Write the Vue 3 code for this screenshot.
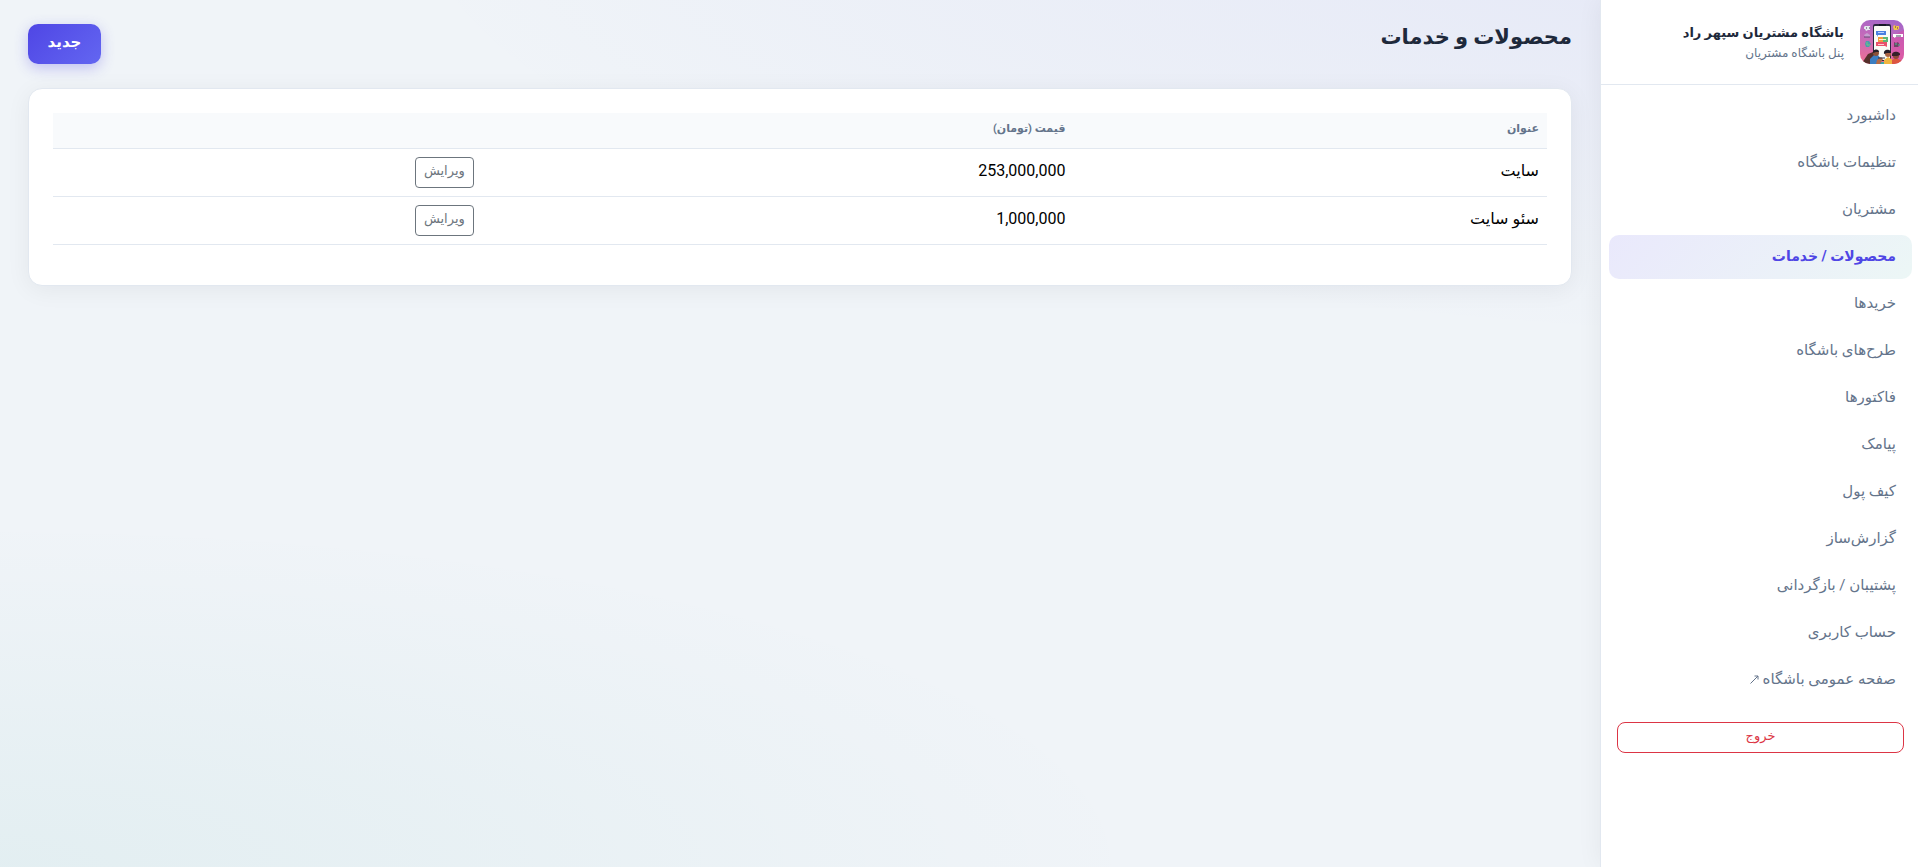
<script setup>
const nav = [
  { label: 'داشبورد' },
  { label: 'تنظیمات باشگاه' },
  { label: 'مشتریان' },
  { label: 'محصولات / خدمات', active: true },
  { label: 'خریدها' },
  { label: 'طرح‌های باشگاه' },
  { label: 'فاکتورها' },
  { label: 'پیامک' },
  { label: 'کیف پول' },
  { label: 'گزارش‌ساز' },
  { label: 'پشتیبان / بازگردانی' },
  { label: 'حساب کاربری' },
  { label: 'صفحه عمومی باشگاه', external: true },
]
const products = [
  { title: 'سایت', price: '253,000,000' },
  { title: 'سئو سایت', price: '1,000,000' },
]
</script>

<template>
  <div class="app" dir="rtl" lang="fa">
    <aside class="sidebar">
      <header class="brand">
        <svg class="logo" viewBox="0 0 44 44" aria-hidden="true">
          <defs>
            <linearGradient id="logo-bg" x1="0.6" y1="0" x2="0.4" y2="1">
              <stop offset="0" stop-color="#a566c8" />
              <stop offset="0.5" stop-color="#c96bb8" />
              <stop offset="1" stop-color="#ec6f96" />
            </linearGradient>
          </defs>
          <rect width="44" height="44" fill="url(#logo-bg)" />
          <path d="M32 16 44 10V44H32z" fill="#d94aa4" opacity="0.5" />
          <rect x="13" y="4" width="18" height="37" rx="2" fill="#2b2740" />
          <rect x="14" y="6" width="16" height="34" rx="1" fill="#fafaf6" />
          <rect x="19" y="4" width="7" height="2" fill="#171725" />
          <path d="M16 11h10v4H18l-1 2v-2h-1z" fill="#4b7fe0" />
          <path d="M18 12.500h6" stroke="#b9d1ff" />
          <path d="M18 17h5v5h-5z" fill="#f39a3d" />
          <path d="M23 17h5v5h-5z" fill="#5cb877" />
          <path d="M19 19.500h7" stroke="#fff3c9" />
          <path d="M16 22h11v5l-2-1h-9z" fill="#e9506b" />
          <path d="M18 24.500h6" stroke="#ffc7cf" />
          <path d="M5 6h5v4H8l-2 1-1-2H4V7z" fill="#e6e9ef" />
          <path d="M6 8h1m2 0h1" stroke="#444159" />
          <path d="M34 5l2 1h3v3l-2 1h-3l-1-3z" fill="#f1c34d" />
          <path d="M35 7h1m1 1h1" stroke="#5e3f2d" />
          <path d="M4 15l3-2 3 2v2H5z" fill="#c79fd0" />
          <path d="M4 17h6" stroke="#644b75" />
          <path d="M33 14h10v3h-7l-2 1v-1h-1z" fill="#fff" />
          <path d="M36 16h5" stroke="#49445b" />
          <path d="M6 21h3l2 3-2 3H6l-1-3z" fill="#4c9cae" />
          <path d="M7 22v3h3" stroke="#77c67d" fill="none" />
          <path d="M34 22l2 1 2-1 2 3-2 2h-4z" fill="#704469" />
          <path d="M35 24h2m1 1h2" stroke="#50c28e" />
          <path d="M2 43l6-9 5-2 2 5-4 7H2z" fill="#55302b" />
          <path d="M10 44v-5l4-4h4l3 4v5z" fill="#3c7ec1" />
          <circle cx="16" cy="33" r="3" fill="#8c5138" />
          <path d="M13 33c-1-4 6-5 6-1h-3z" fill="#241f29" />
          <path d="M17 40l4-3 2 2-3 5h-4z" fill="#b66b45" />
          <path d="M24 44v-4l4-3 5 3v4z" fill="#efb53f" />
          <circle cx="28" cy="34" r="3" fill="#ad6543" />
          <path d="M24 34c-1-6 8-5 7-1h-4z" fill="#251d26" />
          <path d="M32 44v-4l4-2 6 3v3z" fill="#dc563f" />
          <circle cx="36" cy="36" r="3" fill="#8e4937" />
          <path d="M32 36c-1-6 9-5 8-1l-3 1z" fill="#35202a" />
          <path d="M18 38h7" stroke="#303247" />
          <path d="M21 42h3v2h-3z" fill="#41a7a0" />
        </svg>
        <div class="brand-text">
          <strong>باشگاه مشتریان سپهر راد</strong>
          <span>پنل باشگاه مشتریان</span>
        </div>
      </header>
      <nav class="menu">
        <a v-for="item in nav" :key="item.label" href="#" :class="{ active: item.active }">
          {{ item.label }}
          <svg v-if="item.external" class="arrow" viewBox="0 0 9 9" aria-hidden="true">
            <path d="M0.500 8.500 8 1M4.500 1H8v3.500" />
          </svg>
        </a>
      </nav>
      <button class="logout" type="button">خروج</button>
    </aside>

    <main class="main">
      <div class="topbar">
        <h1>محصولات و خدمات</h1>
        <button class="new" type="button">جدید</button>
      </div>
      <section class="card">
        <table>
          <colgroup>
            <col class="c-title" />
            <col class="c-price" />
            <col />
          </colgroup>
          <thead>
            <tr>
              <th scope="col">عنوان</th>
              <th scope="col">قیمت (تومان)</th>
              <td></td>
            </tr>
          </thead>
          <tbody>
            <tr v-for="p in products" :key="p.title">
              <td>{{ p.title }}</td>
              <td>{{ p.price }}</td>
              <td class="action"><button class="edit" type="button">ویرایش</button></td>
            </tr>
          </tbody>
        </table>
      </section>
    </main>
  </div>
</template>

<style>
body {
  margin: 0;
  background: #f1f5f9;
}
</style>

<style scoped>
.app {
  display: flex;
  min-height: 100vh;
  font-family: Roboto, "DejaVu Sans", sans-serif;
  color: #1e293b;
  background:
    radial-gradient(ellipse 80% 50% at 100% -10%, rgba(79, 70, 229, 0.08), transparent),
    radial-gradient(ellipse 60% 40% at 0% 100%, rgba(13, 148, 136, 0.06), transparent),
    #f0f4f8;
}
button {
  font-family: inherit;
  cursor: pointer;
}
.sidebar {
  flex: none;
  box-sizing: border-box;
  width: 318px;
  background: #fff;
  border-left: 1px solid #e2e8f0;
  box-shadow: 0 0 24px rgba(15, 23, 42, 0.06);
}
.brand {
  display: flex;
  align-items: center;
  gap: 16px;
  padding: 20px 14px;
  border-bottom: 1px solid #e2e8f0;
}
.logo {
  width: 44px;
  height: 44px;
  border-radius: 10px;
}
.brand-text {
  display: flex;
  flex-direction: column;
  padding-bottom: 2px;
}
.brand-text strong {
  font-size: 13px;
  line-height: 24px;
}
.brand-text span {
  font-size: 12px;
  line-height: 16px;
  color: #64748b;
}
.menu {
  display: flex;
  flex-direction: column;
  gap: 3px;
  padding: 9px 6px 0 8px;
}
.menu a {
  padding: 0 16px 2px;
  font-size: 15px;
  line-height: 42px;
  color: #64748b;
  text-decoration: none;
  border-radius: 10px;
}
.menu a.active {
  font-size: 14px;
  font-weight: 700;
  color: #4f46e5;
  background: linear-gradient(135deg, rgba(79, 70, 229, 0.12), rgba(13, 148, 136, 0.08));
}
.arrow {
  width: 9px;
  height: 9px;
  fill: none;
  stroke: currentColor;
}
.logout {
  display: block;
  width: calc(100% - 30px);
  height: 31px;
  margin: 20px 14px 0 16px;
  padding: 0 8px 4px;
  font-size: 13px;
  color: #dc3545;
  background: transparent;
  border: 1px solid #dc3545;
  border-radius: 8px;
}
.main {
  flex: 1;
  min-width: 0;
  padding: 24px 28px;
}
.topbar {
  display: flex;
  justify-content: space-between;
  align-items: flex-start;
  margin-bottom: 24px;
}
h1 {
  margin: 0;
  font-size: 21px;
  line-height: 26px;
  font-weight: 700;
}
.new {
  height: 40px;
  min-width: 73px;
  padding: 0 16px 4px;
  font-size: 15px;
  font-weight: 700;
  color: #fff;
  background: linear-gradient(135deg, #4f46e5, #6366f1);
  border: 0;
  border-radius: 10px;
  box-shadow: 0 4px 14px rgba(79, 70, 229, 0.3);
}
.card {
  padding: 24px 24px 40px;
  background: #fff;
  border: 1px solid #e2e8f0;
  border-radius: 14px;
  box-shadow: 0 4px 24px rgba(15, 23, 42, 0.06);
}
table {
  width: 100%;
  table-layout: fixed;
  border-collapse: collapse;
}
.c-title {
  width: 31.7%;
}
.c-price {
  width: 39.6%;
}
th,
td {
  padding: 0 8px 4px;
  text-align: right;
  border-bottom: 1px solid #e2e8f0;
}
thead tr {
  height: 35px;
  background: #f8fafc;
}
th {
  font-size: 11px;
  color: #64748b;
}
tbody tr {
  height: 48px;
}
tbody td {
  font-size: 16px;
  color: #000;
}
td.action {
  padding-bottom: 0;
}
.edit {
  display: block;
  height: 31px;
  padding: 0 8px 4px;
  font-size: 13px;
  color: #6c757d;
  background: transparent;
  border: 1px solid #6c757d;
  border-radius: 4px;
}
</style>
